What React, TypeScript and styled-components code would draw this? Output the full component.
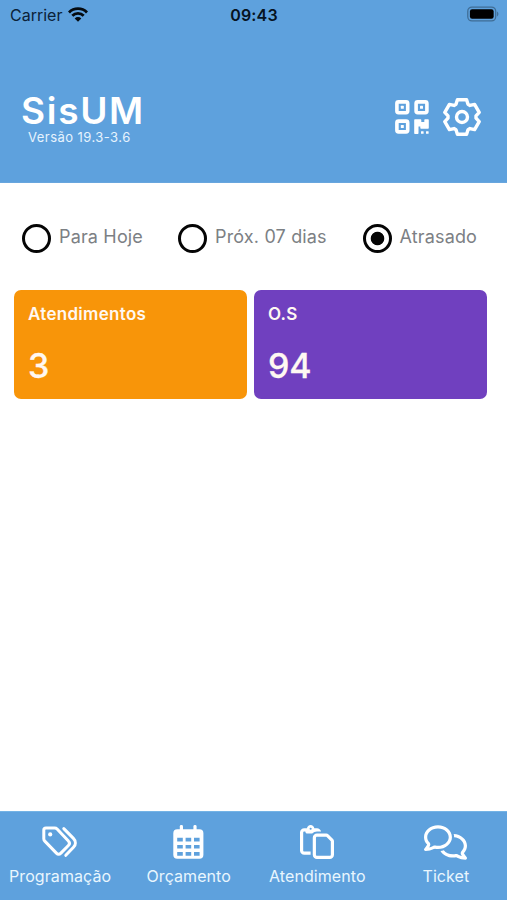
import React from "react";
import styled, { createGlobalStyle } from "styled-components";
import { FaRegPaste, FaRegComments } from "react-icons/fa6";

const GlobalStyle = createGlobalStyle`
  *, *::before, *::after { box-sizing: border-box; }
  body { margin: 0; font-family: Inter, "Liberation Sans", sans-serif; }
`;

const Screen = styled.div`
  display: flex;
  flex-direction: column;
  height: 900px;
  background: #fff;
`;

const Header = styled.header`
  height: 183px;
  background: #5ea1dd;
  border-bottom: 1px solid #68a6de;
`;

const StatusBar = styled.div`
  display: grid;
  grid-template-columns: 1fr auto 1fr;
  align-items: center;
  height: 29px;
  padding: 0 8px 0 10px;
  color: #0b2238;
`;

const Carrier = styled.div`
  display: flex;
  align-items: center;
  gap: 6px;
  font-size: 16px;
  line-height: 20px;
  letter-spacing: 0;
`;

const Clock = styled.div`
  margin-left: -1px;
  font-size: 16px;
  font-weight: 600;
  line-height: 20px;
  letter-spacing: 0.2px;
  color: #06131f;
`;

const BatteryIcon = styled.svg`
  display: block;
  justify-self: end;
  margin-top: -2px;
`;

const TitleBar = styled.div`
  display: flex;
  justify-content: space-between;
  padding: 62px 26.5px 0 21px;
  color: #fff;
`;

const AppName = styled.h1`
  margin: 0;
  font-size: 37px;
  font-weight: 600;
  line-height: 40px;
  letter-spacing: 1.7px;
`;

const Version = styled.div`
  margin-left: 7px;
  font-size: 13px;
  line-height: 13px;
  letter-spacing: 0.45px;
  color: #e6f3fd;
`;

const Actions = styled.div`
  display: flex;
  align-items: center;
  gap: 14px;
  height: 52px;
`;

const Filters = styled.div`
  display: flex;
  height: 106.5px;
  padding: 4.5px 0 0 22px;
`;

const Option = styled.label<{ $width: number }>`
  display: flex;
  align-items: center;
  gap: 8px;
  width: ${(p) => p.$width}px;
  white-space: nowrap;
`;

const OptionText = styled.span`
  margin-top: -3px;
  font-size: 18px;
  line-height: 24px;
  letter-spacing: 0.16px;
  color: #7c8084;
`;

const Radio = styled.span<{ $checked: boolean }>`
  width: 29px;
  height: 29px;
  flex: none;
  border: 3px solid #050505;
  border-radius: 50%;
  background: ${(p) => (p.$checked ? "radial-gradient(circle, #050505 6.3px, #fff 7.2px)" : "#fff")};
`;

const Cards = styled.main`
  display: grid;
  grid-template-columns: 1fr 1fr;
  gap: 7px;
  flex: 1;
  align-content: start;
  padding: 0 20px 0 14px;
`;

const Card = styled.section<{ $color: string }>`
  height: 109px;
  padding: 13px 14px;
  border-radius: 7px;
  background: ${(p) => p.$color};
  color: #fff8f2;
`;

const CardTitle = styled.h2`
  margin: 0;
  font-size: 17px;
  font-weight: 600;
  line-height: 22px;
  letter-spacing: 0.3px;
`;

const CardValue = styled.div`
  margin-top: 20px;
  font-size: 34px;
  font-weight: 500;
  line-height: 42px;
  letter-spacing: -0.2px;
  -webkit-text-stroke: 0.3px currentColor;
`;

const TabBar = styled.nav`
  display: flex;
  justify-content: center;
  height: 89px;
  overflow: hidden;
  background: #5ea1dd;
  border-top: 1px solid #74b3e5;
`;

const Tab = styled.a`
  display: flex;
  flex: none;
  flex-direction: column;
  align-items: center;
  width: 128.6px;
  padding: 11px 1px 0 0;
  color: #fff;
`;

const TabIcon = styled.span`
  display: flex;
  align-items: center;
  justify-content: center;
  height: 38px;
  margin-right: 1px;
`;

const TabLabel = styled.span`
  margin-top: 4px;
  font-size: 16px;
  line-height: 22px;
  letter-spacing: 0.07px;
  color: #e9f6fe;
`;

const gearPoints = Array.from({ length: 6 }, (_, i) => {
  const a = (i * Math.PI) / 3;
  return [[-6, -12.7], [-4.6, -17.2], [4.6, -17.2], [6, -12.7]]
    .map(([x, y]) => `${(x * Math.cos(a) - y * Math.sin(a)).toFixed(2)},${(x * Math.sin(a) + y * Math.cos(a)).toFixed(2)}`)
    .join(" ");
}).join(" ");

const Gear = () => (
  <svg width="38" height="40" viewBox="-19 -20 38 40" fill="none" stroke="currentColor" strokeWidth="3.4" strokeLinejoin="round">
    <polygon points={gearPoints} />
    <circle r="5.5" />
  </svg>
);

const QrCode = () => (
  <svg width="34" height="34" viewBox="0 0 34 34" fill="currentColor">
    {[[0, 0], [19.2, 0], [0, 19.2]].map(([x, y]) => (
      <g key={`${x}-${y}`}>
        <rect x={x + 1.9} y={y + 1.9} width="10.8" height="10.8" rx="1.6" fill="none" stroke="currentColor" strokeWidth="3.6" />
        <rect x={x + 5.8} y={y + 5.8} width="3" height="3" rx="0.5" />
      </g>
    ))}
    <path d="M20.2 19.2h5.1c.6 0 1 .4 1 1v1.9h3v-1.9c0-.6.4-1 1-1h2.5c.6 0 1 .4 1 1v7.6c0 .6-.4 1-1 1h-6.5c-.6 0-1-.4-1-1v-1.4h-1.8v6.5c0 .6-.4 1-1 1h-2.3c-.6 0-1-.4-1-1V20.2c0-.6.4-1 1-1Z" />
    <rect x="26" y="31.2" width="2.6" height="2.6" rx=".4" />
    <rect x="31" y="31.2" width="2.6" height="2.6" rx=".4" />
  </svg>
);

const Calendar = () => (
  <svg width="31" height="34" viewBox="0 0 31 34" fill="currentColor">
    <rect x="6.8" y="0" width="3.2" height="7" rx="1.4" />
    <rect x="20.4" y="0" width="3.2" height="7" rx="1.4" />
    <path
      fillRule="evenodd"
      d={
        "M4.3 4.2h22.1a4 4 0 0 1 4 4v21.5a4 4 0 0 1-4 4H4.3a4 4 0 0 1-4-4V8.2a4 4 0 0 1 4-4Z" +
        [12.8, 19.9, 27].map((y) => [4.2, 12.6, 21].map((x) => `M${x} ${y}h5.6v3.7h-5.6Z`).join("")).join("")
      }
    />
  </svg>
);

const Wifi = () => (
  <svg width="20" height="15" viewBox="0 0 20 15" fill="none" stroke="#050b10" strokeWidth="2.8">
    <path d="M1 5.4a12.7 12.7 0 0 1 18 0" />
    <path d="M4.3 8.8a8 8 0 0 1 11.4 0" />
    <path d="M10 14.7 6.7 11.4a4.7 4.7 0 0 1 6.6 0Z" fill="#050b10" stroke="none" />
  </svg>
);

const Tags = () => (
  <svg width="36" height="32" viewBox="0.6 0 36 32" fill="none" stroke="currentColor" strokeWidth="3" strokeLinecap="round" strokeLinejoin="round">
    <path d="M2.4 4.1v8.6c0 .9.3 1.7 1 2.4l11.6 12c1.3 1.3 3.2 1.3 4.5 0l7.5-7.6c1.3-1.3 1.3-3.2 0-4.5L15.7 3c-.6-.6-1.4-1-2.4-1H4.5c-1.2 0-2.1.9-2.1 2.1Z" />
    <path d="m22.4 2.6 9.6 9.8c2.6 2.7 2.6 6.3.1 8.9l-7.7 8" />
    <circle cx="8.8" cy="8.4" r="2.1" fill="currentColor" stroke="none" />
  </svg>
);

const filters = [
  { label: "Para Hoje", width: 156, checked: false },
  { label: "Próx. 07 dias", width: 184.5, checked: false },
  { label: "Atrasado", width: 120, checked: true },
];

const tabs = [
  { label: "Programação", icon: <Tags /> },
  { label: "Orçamento", icon: <Calendar /> },
  { label: "Atendimento", icon: <FaRegPaste size={34} /> },
  { label: "Ticket", icon: <FaRegComments size={43} /> },
];

export default function App() {
  return (
    <>
      <GlobalStyle />
      <Screen>
        <Header>
          <StatusBar>
            <Carrier>Carrier <Wifi /></Carrier>
            <Clock>09:43</Clock>
            <BatteryIcon width="32" height="16" viewBox="0 0 33 16">
              <rect x=".8" y=".8" width="28.8" height="14.4" rx="4.3" fill="none" stroke="#3f6d96" strokeWidth="1.3" />
              <rect x="3" y="3" width="24.5" height="10" rx="2.3" fill="#000" />
              <path d="M31 5.5c1.8.8 1.8 4.2 0 5Z" fill="#3f6d96" />
            </BatteryIcon>
          </StatusBar>
          <TitleBar>
            <div>
              <AppName>SisUM</AppName>
              <Version>Versão 19.3-3.6</Version>
            </div>
            <Actions>
              <QrCode />
              <Gear />
            </Actions>
          </TitleBar>
        </Header>
        <Filters>
          {filters.map((f) => (
            <Option key={f.label} $width={f.width}>
              <Radio $checked={f.checked} role="radio" aria-checked={f.checked} />
              <OptionText>{f.label}</OptionText>
            </Option>
          ))}
        </Filters>
        <Cards>
          <Card $color="#f89509">
            <CardTitle>Atendimentos</CardTitle>
            <CardValue>3</CardValue>
          </Card>
          <Card $color="#7040bf">
            <CardTitle>O.S</CardTitle>
            <CardValue>94</CardValue>
          </Card>
        </Cards>
        <TabBar>
          {tabs.map((t) => (
            <Tab key={t.label}>
              <TabIcon>{t.icon}</TabIcon>
              <TabLabel>{t.label}</TabLabel>
            </Tab>
          ))}
        </TabBar>
      </Screen>
    </>
  );
}
